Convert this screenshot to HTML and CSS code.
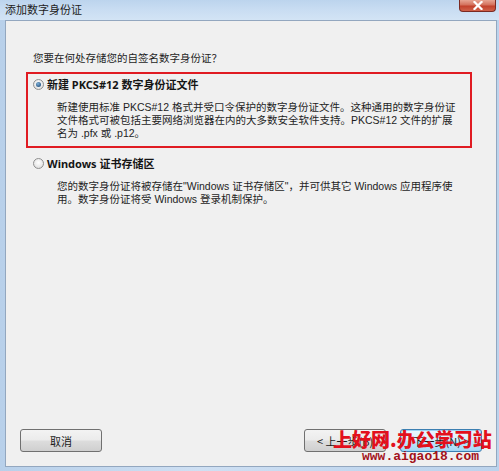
FILE: index.html
```html
<!DOCTYPE html>
<html lang="zh-CN">
<head>
<meta charset="utf-8">
<link rel="stylesheet" href="styles.css">
</head>
<body>
<div class="window">
  <div class="titlebar">
    <span class="title">添加数字身份证</span>
    <span class="close"><svg width="14" height="9" viewBox="0 0 14 9"><path d="M3.5 1 L10.5 8 M10.5 1 L3.5 8" stroke="#fff" stroke-width="2.2" stroke-linecap="square"/></svg></span>
  </div>
  <div class="client">
    <div class="question">您要在何处存储您的自签名数字身份证？</div>
    <div class="option selected">
      <div class="opt-head"><span class="radio checked"></span><span class="opt-title">新建 PKCS#12 数字身份证文件</span></div>
      <div class="opt-desc">新建使用标准 PKCS#12 格式并受口令保护的数字身份证文件。这种通用的数字身份证<br>文件格式可被包括主要网络浏览器在内的大多数安全软件支持。PKCS#12 文件的扩展<br>名为 .pfx 或 .p12。</div>
    </div>
    <div class="option">
      <div class="opt-head"><span class="radio"></span><span class="opt-title">Windows 证书存储区</span></div>
      <div class="opt-desc">您的数字身份证将被存储在"Windows 证书存储区"，并可供其它 Windows 应用程序使<br>用。数字身份证将受 Windows 登录机制保护。</div>
    </div>
    <div class="buttons">
      <button class="btn">取消</button>
      <div class="nav">
        <button class="btn">&lt; 上一步(B)</button>
        <button class="btn focus">下一步(N) &gt;</button>
      </div>
    </div>
  </div>
  <div class="watermark">
    <div class="wm1">上好网.办公学习站</div>
    <div class="wm2">www.aigao18.com</div>
  </div>
</div>
</body>
</html>
```

FILE: styles.css
```css
html, body {
  margin: 0;
  padding: 0;
}
body {
  width: 499px;
  height: 471px;
  overflow: hidden;
  font-family: "Liberation Sans", "Noto Sans CJK SC", sans-serif;
  font-size: 10.5px;
  color: #1e1e1e;
}
.window {
  position: relative;
  width: 499px;
  height: 471px;
  display: flex;
  flex-direction: column;
  background: linear-gradient(90deg, #b8d0ea 0%, #cfe0f3 40%, #c3d8ef 70%, #bcd3ec 100%);
  box-sizing: border-box;
}
.titlebar {
  height: 20px;
  flex: none;
  display: flex;
  justify-content: space-between;
  align-items: flex-start;
  padding: 0 3px 0 5px;
  background: linear-gradient(180deg, #bcd4ed 0%, #c9ddf2 50%, #d3e4f5 100%);
}
.title {
  font-family: "Noto Sans CJK SC", sans-serif;
  font-size: 11px;
  line-height: 18px;
  color: #222;
}
.close {
  width: 37px;
  height: 12px;
  box-sizing: border-box;
  border: 1px solid #7b2a22;
  border-top: none;
  border-radius: 0 0 4px 4px;
  background: linear-gradient(180deg, #e7a593 0%, #d4715c 45%, #c2412c 55%, #d0624a 100%);
  display: flex;
  align-items: center;
  justify-content: center;
}
.close svg { display: block; }
.client {
  flex: 1;
  margin: 0 2px 4px 5px;
  border: 1px solid #93a7bf;
  background: #f0f0f0;
  display: flex;
  flex-direction: column;
  min-height: 0;
}
.question {
  margin: 30px 0 0 27px;
  line-height: 14px;
  font-family: "Noto Sans CJK SC", sans-serif;
}
.option {
  margin: 7px 0 0 20px;
  width: 446px;
  box-sizing: border-box;
  border: 2px solid transparent;
  padding: 2px 0 6px 0;
}
.option.selected {
  border-color: #e01b22;
}
.option + .option {
  margin-top: 3px;
}
.opt-head {
  display: flex;
  align-items: center;
  gap: 3px;
  padding-left: 5px;
  height: 16px;
}
.opt-title {
  font-weight: bold;
  font-family: "Noto Sans", "Noto Sans CJK SC", sans-serif;
  font-size: 11px;
  color: #151515;
}
.radio {
  width: 11px;
  height: 11px;
  box-sizing: border-box;
  border-radius: 50%;
  border: 1px solid #8f8f8f;
  background: radial-gradient(circle at 50% 40%, #ffffff 0%, #e8e8e8 60%, #d0d0d0 100%);
  position: relative;
  flex: none;
}
.radio.checked::after {
  content: "";
  position: absolute;
  left: 2px;
  top: 2px;
  width: 5px;
  height: 5px;
  border-radius: 50%;
  background: radial-gradient(circle at 40% 35%, #7fb0d8 0%, #2e5d8a 70%, #1d3d62 100%);
}
.opt-desc {
  margin: 9px 0 0 29px;
  line-height: 13px;
  white-space: nowrap;
  color: #1e1e1e;
}
.buttons {
  margin-top: auto;
  display: flex;
  justify-content: space-between;
  padding: 0 14px 14px 14px;
}
.nav {
  display: flex;
  gap: 14px;
}
.btn {
  width: 82px;
  height: 23px;
  box-sizing: border-box;
  border: 1px solid #707070;
  border-radius: 3px;
  background: linear-gradient(180deg, #f3f3f3 0%, #ebebeb 48%, #dddddd 52%, #cfcfcf 100%);
  font-family: "Noto Sans CJK SC", sans-serif;
  font-size: 11px;
  color: #1a1a1a;
  padding: 0;
}
.btn.focus {
  border-color: #3c7fb1;
  box-shadow: inset 0 0 0 1px #9fd5f5;
  background: linear-gradient(180deg, #eaf6fd 0%, #d9f0fc 48%, #bee6fd 52%, #a7d9f5 100%);
}
.watermark {
  position: absolute;
  left: 333px;
  top: 427px;
  display: flex;
  flex-direction: column;
  align-items: flex-start;
  width: 166px;
}
.wm1 {
  font-family: "Noto Sans CJK SC", serif;
  font-weight: 900;
  font-size: 19px;
  line-height: 23px;
  color: #e3101c;
  white-space: nowrap;
}
.wm2 {
  font-family: "Liberation Mono", monospace;
  font-weight: bold;
  font-size: 13px;
  line-height: 13px;
  color: #a3121a;
  margin-left: 29px;
}
```
